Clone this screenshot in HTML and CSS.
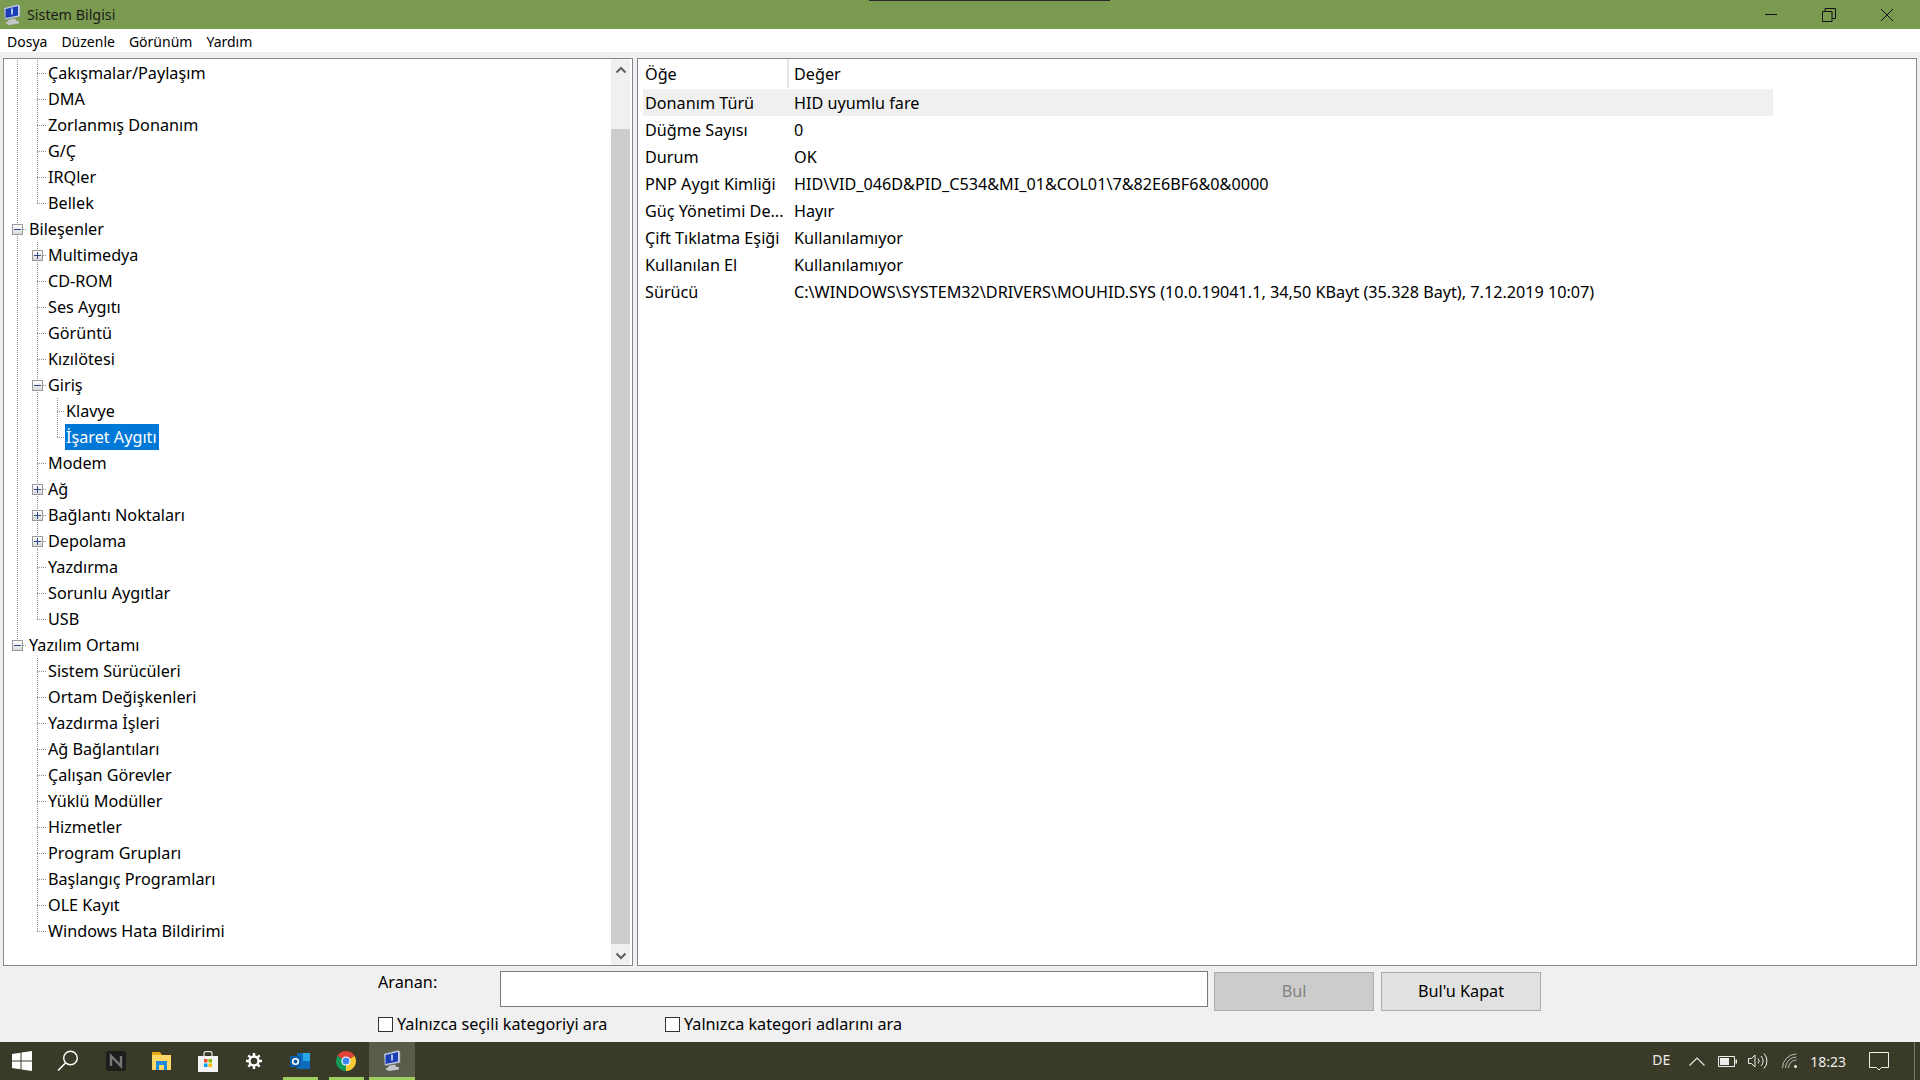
FILE: index.html
```html
<!DOCTYPE html>
<html lang="tr">
<head>
    <meta charset="UTF-8">
    <title>Sistem Bilgisi</title>
    <link rel="stylesheet" href="styles.css">
</head>
<body>
    <header class="titlebar">
        <div class="title-left">
            <svg class="app-icon" width="20" height="22" viewBox="0 0 20 22">
                <path d="M2 4l14-3.500 2 1v11l-15 3z" fill="#cfd6e4" stroke="#8b93a6" stroke-width=".6"/>
                <path d="M3.500 5l12.500-3v9.500l-12.500 2.500z" fill="#1c3eb4"/>
                <path d="M10 4.500v6" stroke="#dfe8ff" stroke-width="1.500"/>
                <path d="M6 16l7-1.500 1 2 3 1v2l-10 1.500-3-1.500v-1.500l2.500-.5z" fill="#c3c7cc"/>
            </svg>
            <span>Sistem Bilgisi</span>
        </div>
        <div class="window-buttons">
            <svg width="14" height="14" viewBox="0 0 14 14"><path d="M1 6.500h12" stroke="#111" fill="none"/></svg>
            <svg width="14" height="14" viewBox="0 0 14 14"><path d="M.5 3.500h9.500v10h-9.500zM3 3.500v-3h10.500v10h-3.500" stroke="#111" fill="none"/></svg>
            <svg width="14" height="14" viewBox="0 0 14 14"><path d="M1 1l12 12M13 1l-12 12" stroke="#111" fill="none"/></svg>
        </div>
        <div class="top-sliver"></div>
    </header>

    <nav class="menubar">
        <span>Dosya</span>
        <span>Düzenle</span>
        <span>Görünüm</span>
        <span>Yardım</span>
    </nav>

    <main class="panes">
        <section class="tree-pane">
            <div class="tree">
                <div class="row"><i class="c v"></i><i class="c t"></i><span class="label">Çakışmalar/Paylaşım</span></div>
                <div class="row"><i class="c v"></i><i class="c t"></i><span class="label">DMA</span></div>
                <div class="row"><i class="c v"></i><i class="c t"></i><span class="label">Zorlanmış Donanım</span></div>
                <div class="row"><i class="c v"></i><i class="c t"></i><span class="label">G/Ç</span></div>
                <div class="row"><i class="c v"></i><i class="c t"></i><span class="label">IRQler</span></div>
                <div class="row"><i class="c v"></i><i class="c l"></i><span class="label">Bellek</span></div>
                <div class="row"><i class="c t"><b class="box minus"></b></i><span class="label top">Bileşenler</span></div>
                <div class="row"><i class="c v"></i><i class="c t"><b class="box plus"></b></i><span class="label">Multimedya</span></div>
                <div class="row"><i class="c v"></i><i class="c t"></i><span class="label">CD-ROM</span></div>
                <div class="row"><i class="c v"></i><i class="c t"></i><span class="label">Ses Aygıtı</span></div>
                <div class="row"><i class="c v"></i><i class="c t"></i><span class="label">Görüntü</span></div>
                <div class="row"><i class="c v"></i><i class="c t"></i><span class="label">Kızılötesi</span></div>
                <div class="row"><i class="c v"></i><i class="c t"><b class="box minus"></b></i><span class="label">Giriş</span></div>
                <div class="row"><i class="c v"></i><i class="c v"></i><i class="c s t"></i><span class="label">Klavye</span></div>
                <div class="row"><i class="c v"></i><i class="c v"></i><i class="c s l"></i><span class="label selected">İşaret Aygıtı</span></div>
                <div class="row"><i class="c v"></i><i class="c t"></i><span class="label">Modem</span></div>
                <div class="row"><i class="c v"></i><i class="c t"><b class="box plus"></b></i><span class="label">Ağ</span></div>
                <div class="row"><i class="c v"></i><i class="c t"><b class="box plus"></b></i><span class="label">Bağlantı Noktaları</span></div>
                <div class="row"><i class="c v"></i><i class="c t"><b class="box plus"></b></i><span class="label">Depolama</span></div>
                <div class="row"><i class="c v"></i><i class="c t"></i><span class="label">Yazdırma</span></div>
                <div class="row"><i class="c v"></i><i class="c t"></i><span class="label">Sorunlu Aygıtlar</span></div>
                <div class="row"><i class="c v"></i><i class="c l"></i><span class="label">USB</span></div>
                <div class="row"><i class="c l"><b class="box minus"></b></i><span class="label top">Yazılım Ortamı</span></div>
                <div class="row"><i class="c"></i><i class="c t"></i><span class="label">Sistem Sürücüleri</span></div>
                <div class="row"><i class="c"></i><i class="c t"></i><span class="label">Ortam Değişkenleri</span></div>
                <div class="row"><i class="c"></i><i class="c t"></i><span class="label">Yazdırma İşleri</span></div>
                <div class="row"><i class="c"></i><i class="c t"></i><span class="label">Ağ Bağlantıları</span></div>
                <div class="row"><i class="c"></i><i class="c t"></i><span class="label">Çalışan Görevler</span></div>
                <div class="row"><i class="c"></i><i class="c t"></i><span class="label">Yüklü Modüller</span></div>
                <div class="row"><i class="c"></i><i class="c t"></i><span class="label">Hizmetler</span></div>
                <div class="row"><i class="c"></i><i class="c t"></i><span class="label">Program Grupları</span></div>
                <div class="row"><i class="c"></i><i class="c t"></i><span class="label">Başlangıç Programları</span></div>
                <div class="row"><i class="c"></i><i class="c t"></i><span class="label">OLE Kayıt</span></div>
                <div class="row"><i class="c"></i><i class="c l"></i><span class="label">Windows Hata Bildirimi</span></div>
            </div>
            <div class="scrollbar">
                <svg class="arrow" width="12" height="8" viewBox="0 0 12 8"><path d="M1.500 6.500l4.500-4.500 4.500 4.500" stroke="#606060" stroke-width="2" fill="none"/></svg>
                <div class="thumb"></div>
                <svg class="arrow" width="12" height="8" viewBox="0 0 12 8"><path d="M1.500 1.500l4.500 4.500 4.500-4.500" stroke="#606060" stroke-width="2" fill="none"/></svg>
            </div>
        </section>

        <section class="list-pane">
            <div class="list">
                <div class="list-head"><span class="col-item">Öğe</span><span class="col-value">Değer</span></div>
                <div class="list-row hover"><span class="col-item">Donanım Türü</span><span class="col-value">HID uyumlu fare</span></div>
                <div class="list-row"><span class="col-item">Düğme Sayısı</span><span class="col-value">0</span></div>
                <div class="list-row"><span class="col-item">Durum</span><span class="col-value">OK</span></div>
                <div class="list-row"><span class="col-item">PNP Aygıt Kimliği</span><span class="col-value">HID\VID_046D&amp;PID_C534&amp;MI_01&amp;COL01\7&amp;82E6BF6&amp;0&amp;0000</span></div>
                <div class="list-row"><span class="col-item">Güç Yönetimi De...</span><span class="col-value">Hayır</span></div>
                <div class="list-row"><span class="col-item">Çift Tıklatma Eşiği</span><span class="col-value">Kullanılamıyor</span></div>
                <div class="list-row"><span class="col-item">Kullanılan El</span><span class="col-value">Kullanılamıyor</span></div>
                <div class="list-row"><span class="col-item">Sürücü</span><span class="col-value">C:\WINDOWS\SYSTEM32\DRIVERS\MOUHID.SYS (10.0.19041.1, 34,50 KBayt (35.328 Bayt), 7.12.2019 10:07)</span></div>
            </div>
        </section>
    </main>

    <form class="search">
        <div class="search-top">
            <label class="search-label">Aranan:</label>
            <div class="search-input"></div>
            <div class="btn disabled">Bul</div>
            <div class="btn">Bul'u Kapat</div>
        </div>
        <div class="search-options">
            <div class="check"><i></i>Yalnızca seçili kategoriyi ara</div>
            <div class="check"><i></i>Yalnızca kategori adlarını ara</div>
        </div>
    </form>

    <footer class="taskbar">
        <div class="task-icons">
            <div class="task shifted"><svg width="20" height="20" viewBox="0 0 20 20"><path d="M0 3l8.500-1.200v7.700h-8.500zM9.500 1.600l10.500-1.600v9.500h-10.500zM0 10.500h8.500v7.700l-8.500-1.200zM9.500 10.500h10.500v9.500l-10.500-1.600z" fill="#fff"/></svg></div>
            <div class="task shifted"><svg width="22" height="22" viewBox="0 0 22 22"><circle cx="13.500" cy="8" r="6.800" fill="none" stroke="#fff" stroke-width="1.400"/><path d="M8.500 13l-7.500 7.500" stroke="#fff" stroke-width="1.600"/></svg></div>
            <div class="task"><svg width="20" height="20" viewBox="0 0 20 20"><rect width="20" height="20" rx="3" fill="#1d1d1d"/><path d="M5 15v-10l10 10v-10" fill="none" stroke="#777" stroke-width="2.400"/></svg></div>
            <div class="task"><svg width="20" height="18" viewBox="0 0 20 18"><path d="M0 0h8l2 3h-10z" fill="#e8a912"/><path d="M0 3h19v15h-19z" fill="#ffd765"/><path d="M4 9h11v9h-3v-5h-5v5h-3z" fill="#1f8ae0"/></svg></div>
            <div class="task"><svg width="20" height="21" viewBox="0 0 20 21"><path d="M6 5v-2.500a2 2 0 0 1 2-2h4a2 2 0 0 1 2 2v2.500" fill="none" stroke="#ddd" stroke-width="1.300"/><path d="M0 5h20v16h-20z" fill="#f4f4f4"/><path d="M6 8h3.500v3.500h-3.500z" fill="#f25022"/><path d="M10.500 8h3.500v3.500h-3.500z" fill="#7fba00"/><path d="M6 12.500h3.500v3.500h-3.500z" fill="#00a4ef"/><path d="M10.500 12.500h3.500v3.500h-3.500z" fill="#ffb900"/></svg></div>
            <div class="task"><svg width="16" height="16" viewBox="0 0 16 16"><circle cx="8" cy="8" r="4.500" fill="none" stroke="#fff" stroke-width="2.400"/><path d="M8 0v3M8 13v3M0 8h3M13 8h3M2.300 2.300l2.200 2.200M11.500 11.500l2.200 2.200M13.700 2.300l-2.200 2.200M4.500 11.500l-2.200 2.200" stroke="#fff" stroke-width="2.400"/></svg></div>
            <div class="task running"><svg width="20" height="18" viewBox="0 0 20 18"><path d="M7 1h13v16h-13z" fill="#0f6cbd"/><path d="M13 1h7v8h-7z" fill="#28a8ea"/><path d="M0 4h11v11h-11z" fill="#0a5ea8"/><circle cx="5.500" cy="9.500" r="2.800" fill="none" stroke="#fff" stroke-width="1.600"/></svg></div>
            <div class="task running"><svg width="20" height="20" viewBox="0 0 20 20"><path d="M10 10l-8.660-5a10 10 0 0 1 17.320 0z" fill="#db4437"/><path d="M10 10v10a10 10 0 0 1-8.660-15z" fill="#0f9d58"/><path d="M10 10l8.660-5a10 10 0 0 1-8.660 15z" fill="#fcc934"/><circle cx="10" cy="10" r="4.600" fill="#fff"/><circle cx="10" cy="10" r="3.500" fill="#4285f4"/></svg></div>
            <div class="task running active"><svg width="20" height="22" viewBox="0 0 20 22"><path d="M2 4l14-3.500 2 1v11l-15 3z" fill="#cfd6e4" stroke="#8b93a6" stroke-width=".6"/><path d="M3.500 5l12.500-3v9.500l-12.500 2.500z" fill="#1c3eb4"/><path d="M10 4.500v6" stroke="#dfe8ff" stroke-width="1.500"/><path d="M6 16l7-1.500 1 2 3 1v2l-10 1.500-3-1.500v-1.500l2.500-.5z" fill="#c3c7cc"/></svg></div>
        </div>
        <div class="tray">
            <span class="lang">DE</span>
            <svg width="16" height="9" viewBox="0 0 16 9"><path d="M.5 8.500l7.500-7.500 7.500 7.500" fill="none" stroke="#e8e8e8" stroke-width="1.200"/></svg>
            <svg class="tray-battery" width="19" height="11" viewBox="0 0 19 11"><path d="M.5.500h16v10h-16z" fill="none" stroke="#eee"/><path d="M2 2h9v7h-9z" fill="#eee"/><path d="M17.500 3.500h1.500v4h-1.500z" fill="#eee"/></svg>
            <svg class="tray-sound" width="21" height="16" viewBox="0 0 21 16"><path d="M.5 5.500h3l3.500-3.500v12l-3.500-3.500h-3z" fill="none" stroke="#eee"/><path d="M10 5.500a3.500 3.500 0 0 1 0 5M13 3a7 7 0 0 1 0 10M16 .5a11 11 0 0 1 0 15" fill="none" stroke="#eee"/></svg>
            <svg class="tray-wifi" width="16" height="16" viewBox="0 0 16 16"><path d="M.5 15a14 14 0 0 1 14-14M3.500 15a11 11 0 0 1 11-11M6.500 15a8 8 0 0 1 8-8" fill="none" stroke="#bbb"/><circle cx="13.500" cy="13.500" r="1.500" fill="#eee"/></svg>
            <span class="clock">18:23</span>
            <svg class="tray-note" width="20" height="19" viewBox="0 0 20 19"><path d="M.5.500h19v15h-7l-2.500 2.500-2.500-2.500h-7z" fill="none" stroke="#eee"/></svg>
            <div class="show-desktop"></div>
        </div>
    </footer>
</body>
</html>
```

FILE: styles.css
```css
* {
    box-sizing: border-box;
}
body {
    margin: 0;
    width: 1920px;
    height: 1080px;
    overflow: hidden;
    display: flex;
    flex-direction: column;
    background-color: #f0f0f0;
    font-family: 'Noto Sans', sans-serif;
    font-size: 16.2px;
    color: #000;
}

/* title bar */
.titlebar {
    position: relative;
    height: 29px;
    background-color: #7a9a50;
    display: flex;
    justify-content: space-between;
    align-items: center;
}
.title-left {
    display: flex;
    align-items: center;
    padding-left: 2px;
    gap: 5px;
    font-size: 14.3px;
    color: #1a1a1a;
}
.title-left span {
    padding-bottom: 1px;
}
.window-buttons {
    display: flex;
    gap: 44px;
    padding-right: 26px;
}
.top-sliver {
    position: absolute;
    left: 869px;
    top: 0;
    width: 241px;
    height: 1px;
    background-color: #2a2a2a;
}

/* menu */
.menubar {
    height: 23px;
    background-color: #fff;
    display: flex;
    align-items: center;
    padding: 1px 0 0 7px;
    gap: 14px;
    font-size: 14px;
}

/* panes */
.panes {
    flex: 1;
    display: flex;
    gap: 4px;
    padding: 6px 3px 0;
    min-height: 0;
}
.tree-pane {
    width: 630px;
    display: flex;
    background-color: #fff;
    border: 1px solid #828790;
}
.tree {
    flex: 1;
    padding-top: 1px;
}
.row {
    height: 26px;
    display: flex;
    align-items: center;
}
.c {
    position: relative;
    width: 20px;
    height: 26px;
    flex: none;
}
.row > .c:first-child {
    margin-left: 3px;
}
.c.s {
    width: 18px;
}
.v {
    background: repeating-linear-gradient(to bottom, #8c8c8c 0 1px, transparent 1px 2px) 10px 0 / 1px 100% no-repeat;
}
.t {
    background:
        repeating-linear-gradient(to bottom, #8c8c8c 0 1px, transparent 1px 2px) 10px 0 / 1px 100% no-repeat,
        repeating-linear-gradient(to right, #8c8c8c 0 1px, transparent 1px 2px) 10px 13px / 10px 1px no-repeat;
}
.l {
    background:
        repeating-linear-gradient(to bottom, #8c8c8c 0 1px, transparent 1px 2px) 10px 0 / 1px 14px no-repeat,
        repeating-linear-gradient(to right, #8c8c8c 0 1px, transparent 1px 2px) 10px 13px / 10px 1px no-repeat;
}
.box {
    position: absolute;
    left: 5px;
    top: 8px;
    width: 11px;
    height: 11px;
    border: 1px solid #9a9a9a;
    background: linear-gradient(#fff, #d8d8d8);
}
.minus::before,
.plus::before {
    content: "";
    position: absolute;
    left: 1px;
    top: 4px;
    width: 7px;
    height: 1px;
    background-color: #2a4a8c;
}
.plus::after {
    content: "";
    position: absolute;
    left: 4px;
    top: 1px;
    width: 1px;
    height: 7px;
    background-color: #2a4a8c;
}
.label {
    padding: 0 2px 0 1px;
    line-height: 26px;
    white-space: nowrap;
}
.top {
    margin-left: 1px;
}
.selected {
    background-color: #0078d7;
    color: #fff;
}
.scrollbar {
    width: 19px;
    margin-right: 2px;
    background-color: #f0f0f0;
    display: flex;
    flex-direction: column;
    align-items: center;
    padding-top: 7px;
}
.arrow {
    flex: none;
}
.thumb {
    align-self: stretch;
    flex: 1;
    margin-top: 55px;
    margin-bottom: 8px;
    background-color: #cdcdcd;
}
.scrollbar .arrow:last-child {
    margin-bottom: 5px;
}

.list-pane {
    flex: 1;
    background-color: #fff;
    border: 1px solid #828790;
    padding-left: 5px;
}
.list {
    width: 1130px;
}
.list-head {
    height: 30px;
    display: flex;
    align-items: flex-start;
}
.list-head .col-item {
    height: 29px;
    line-height: 30px;
    border-right: 2px solid #e5e5e5;
}
.list-head .col-value {
    line-height: 30px;
}
.list-row {
    height: 27px;
    display: flex;
    align-items: center;
}
.hover {
    background-color: #f0f0f0;
}
.col-item {
    width: 146px;
    padding-left: 2px;
    flex: none;
    white-space: nowrap;
}
.col-value {
    padding-left: 5px;
    white-space: nowrap;
}

/* search strip */
.search {
    height: 76px;
    margin: 0;
    padding: 5px 0 0 378px;
}
.search-top {
    display: flex;
    align-items: flex-start;
}
.search-label {
    width: 122px;
}
.search-input {
    width: 708px;
    height: 36px;
    background-color: #fff;
    border: 1px solid #7a7a7a;
}
.btn {
    width: 160px;
    height: 39px;
    margin: 1px 0 0 6px;
    padding-bottom: 2px;
    background-color: #e1e1e1;
    border: 1px solid #adadad;
    display: flex;
    align-items: center;
    justify-content: center;
}
.btn + .btn {
    margin-left: 7px;
}
.disabled {
    background-color: #cccccc;
    color: #838383;
}
.search-options {
    display: flex;
    margin-top: 0;
}
.check {
    width: 287px;
    height: 26px;
    display: flex;
    align-items: center;
    gap: 4px;
}
.check i {
    width: 15px;
    height: 15px;
    background-color: #fff;
    border: 1px solid #333;
}

/* taskbar */
.taskbar {
    height: 38px;
    background-color: #3a3a28;
    display: flex;
    justify-content: space-between;
    color: #eee;
}
.task-icons {
    display: flex;
    padding-left: 1px;
}
.task {
    width: 46px;
    display: flex;
    align-items: center;
    justify-content: center;
}
.shifted {
    padding-right: 5px;
}
.running {
    background: linear-gradient(#9ccf5f, #9ccf5f) 6px 100% / 35px 3px no-repeat;
}
.active {
    background: linear-gradient(#9ccf5f, #9ccf5f) 0 100% / 100% 3px no-repeat, #5a5c4a;
}
.tray {
    display: flex;
    align-items: center;
    font-size: 14px;
}
.lang {
    margin-right: 19px;
    padding-bottom: 3px;
}
.tray-battery {
    margin-left: 13px;
}
.tray-sound {
    margin-left: 11px;
}
.tray-wifi {
    margin-left: 13px;
}
.clock {
    margin-left: 12px;
}
.tray-note {
    margin-left: 23px;
}
.show-desktop {
    width: 1px;
    height: 38px;
    margin-left: 25px;
    margin-right: 5px;
    background-color: #777;
}
```
